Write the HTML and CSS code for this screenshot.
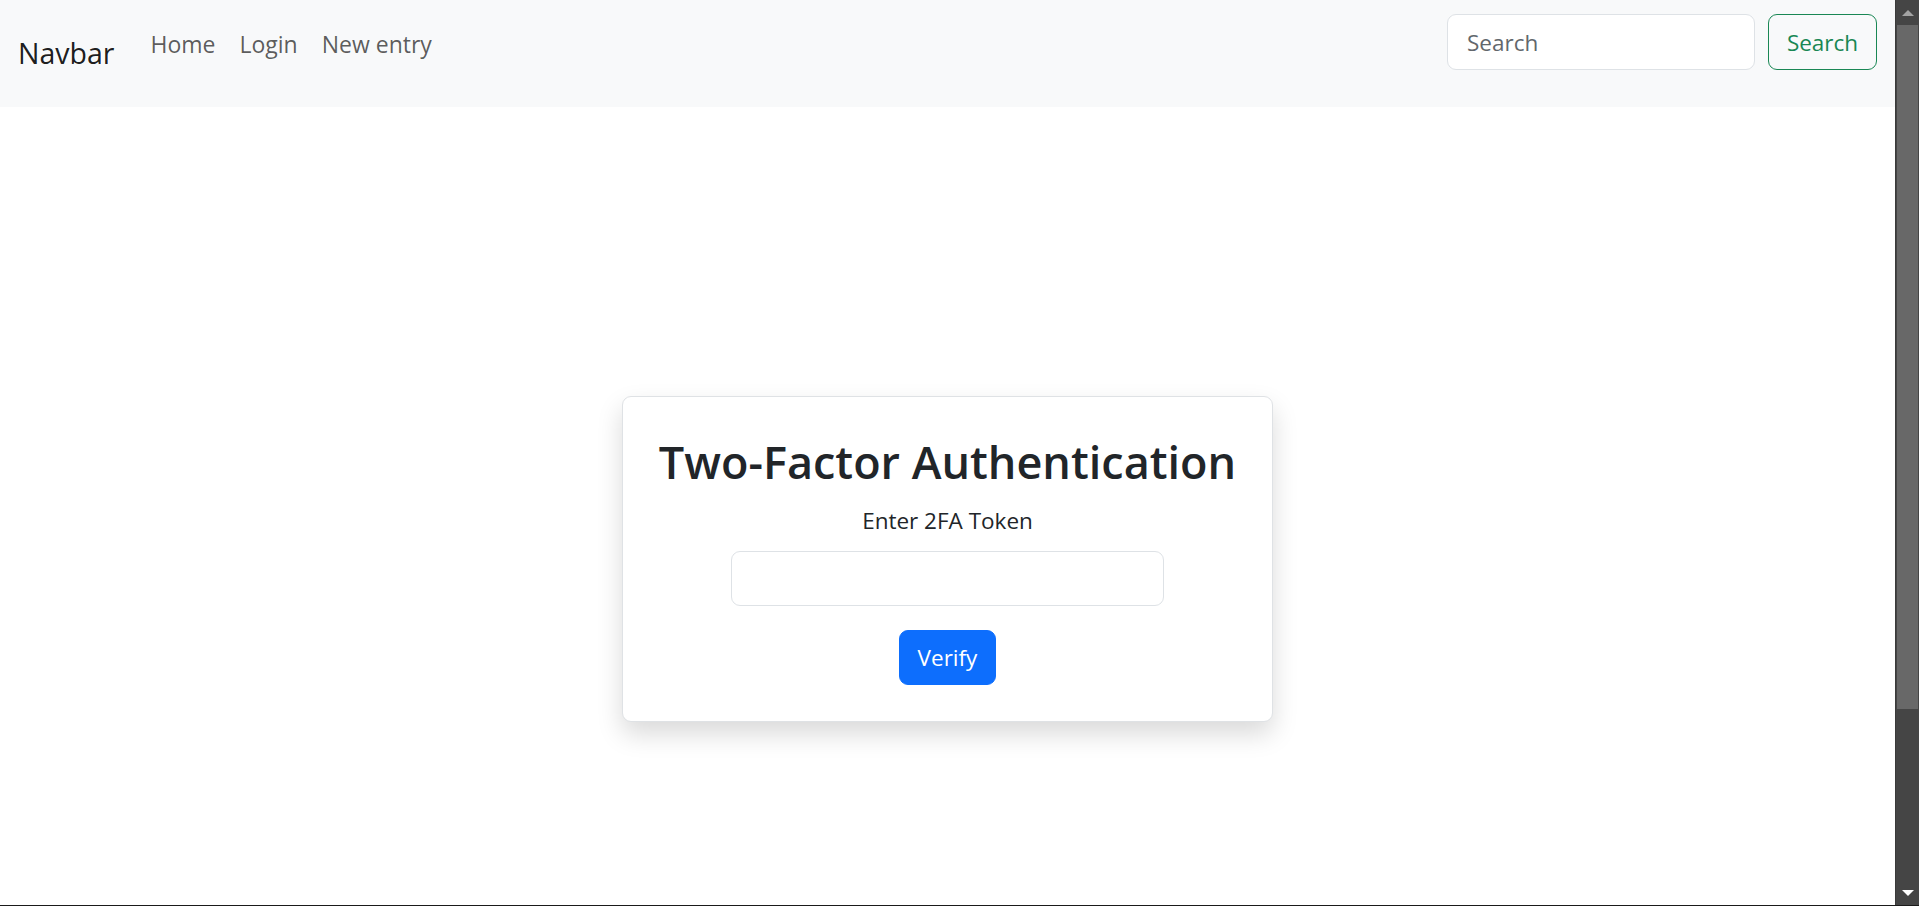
FILE: index.html
```html
<!DOCTYPE html>
<html lang="en">
<head>
<meta charset="utf-8">
<title>Two-Factor Authentication</title>
<link rel="stylesheet" href="styles.css">
</head>
<body>
<div class="page">
  <div class="main">
    <nav class="navbar">
      <a class="brand" href="#">Navbar</a>
      <ul class="nav">
        <li><a class="nav-link" href="#">Home</a></li>
        <li><a class="nav-link" href="#">Login</a></li>
        <li><a class="nav-link" href="#">New entry</a></li>
      </ul>
      <form class="search">
        <input class="search-input" type="search" placeholder="Search">
        <button class="btn-outline" type="button">Search</button>
      </form>
    </nav>
    <section class="stage">
      <div class="card">
        <h2 class="card-title">Two-Factor Authentication</h2>
        <label class="card-label" for="token">Enter 2FA Token</label>
        <input class="token-input" id="token" type="text">
        <button class="btn-primary" type="button">Verify</button>
      </div>
    </section>
  </div>
  <div class="scrollbar">
    <div class="sb-btn"><span class="arrow-up"></span></div>
    <div class="sb-thumb"></div>
    <div class="sb-track"></div>
    <div class="sb-btn"><span class="arrow-down"></span></div>
  </div>
</div>
</body>
</html>
```

FILE: styles.css
```css
html, body {
  margin: 0;
  padding: 0;
  overflow: hidden;
}

body {
  font-family: "Open Sans", "Noto Sans", "Liberation Sans", sans-serif;
  color: #212529;
  background: #ffffff;
}

.page {
  display: flex;
  height: 905px;
  border-bottom: 1px solid #1a1a1a;
}

.main {
  flex: 1;
  min-width: 0;
  display: flex;
  flex-direction: column;
  overflow: hidden;
}

/* ---------- navbar ---------- */
.navbar {
  height: 107px;
  box-sizing: border-box;
  flex: none;
  background: #f8f9fa;
  display: flex;
  align-items: center;
  padding: 14px 18px 37px 18px;
}

.brand {
  font-size: 28.5px;
  line-height: 42px;
  color: rgba(0, 0, 0, 0.9);
  text-decoration: none;
  margin-right: 24px;
  margin-top: 22px;
}

.nav {
  list-style: none;
  margin: 3px 0 0;
  padding: 0;
  display: flex;
  flex: 1;
}

.nav-link {
  display: block;
  font-size: 23px;
  line-height: 36px;
  padding: 0 12px;
  color: rgba(0, 0, 0, 0.65);
  text-decoration: none;
}

.search {
  display: flex;
  gap: 13px;
  margin: 0;
}

.search-input {
  width: 308px;
  height: 56px;
  box-sizing: border-box;
  border: 1px solid #dee2e6;
  border-radius: 9px;
  background: #ffffff;
  padding: 0 19px;
  font-family: inherit;
  font-size: 22.5px;
  color: #212529;
  outline: none;
}

.search-input::placeholder {
  color: #62676c;
}

.btn-outline {
  width: 109px;
  height: 56px;
  box-sizing: border-box;
  border: 1px solid #198754;
  border-radius: 9px;
  background: transparent;
  color: #198754;
  font-family: inherit;
  font-size: 22.5px;
  padding: 0;
}

/* ---------- card ---------- */
.stage {
  flex: none;
  height: 798px;
  display: flex;
  align-items: flex-start;
  justify-content: center;
  padding-top: 289px;
  box-sizing: border-box;
}

.card {
  width: 651px;
  box-sizing: border-box;
  border: 1px solid #dfe2e5;
  border-radius: 9px;
  background: #ffffff;
  box-shadow: 0 12px 26px rgba(0, 0, 0, 0.15);
  padding: 38px 24px 36px;
  display: flex;
  flex-direction: column;
  align-items: center;
}

.card-title {
  margin: 0 0 14px;
  font-size: 45px;
  line-height: 54px;
  font-weight: 600;
  color: #212529;
}

.card-label {
  font-size: 22.5px;
  line-height: 36px;
  margin-bottom: 12px;
}

.token-input {
  width: 433px;
  height: 55px;
  box-sizing: border-box;
  border: 1px solid #dee2e6;
  border-radius: 9px;
  padding: 0 18px;
  font-family: inherit;
  font-size: 22.5px;
  outline: none;
  margin-bottom: 24px;
}

.btn-primary {
  height: 55px;
  padding: 0 18px;
  border: 1px solid #0d6efd;
  border-radius: 9px;
  background: #0d6efd;
  color: #ffffff;
  font-family: inherit;
  font-size: 22.5px;
}

/* ---------- scrollbar ---------- */
.scrollbar {
  width: 24px;
  flex: none;
  display: flex;
  flex-direction: column;
  background: #454545;
  box-sizing: border-box;
  border-left: 1px solid #3a3a3a;
}

.sb-btn {
  height: 25px;
  flex: none;
  display: flex;
  align-items: center;
  justify-content: center;
}

.sb-thumb {
  height: 684px;
  flex: none;
  margin: 0 1px 0 1px;
  background: #686868;
}

.sb-track {
  flex: 1;
}

.arrow-up {
  width: 0;
  height: 0;
  border-left: 6px solid transparent;
  border-right: 6px solid transparent;
  border-bottom: 6px solid #a3a3a3;
}

.arrow-down {
  width: 0;
  height: 0;
  border-left: 6px solid transparent;
  border-right: 6px solid transparent;
  border-top: 6px solid #ffffff;
}
```
